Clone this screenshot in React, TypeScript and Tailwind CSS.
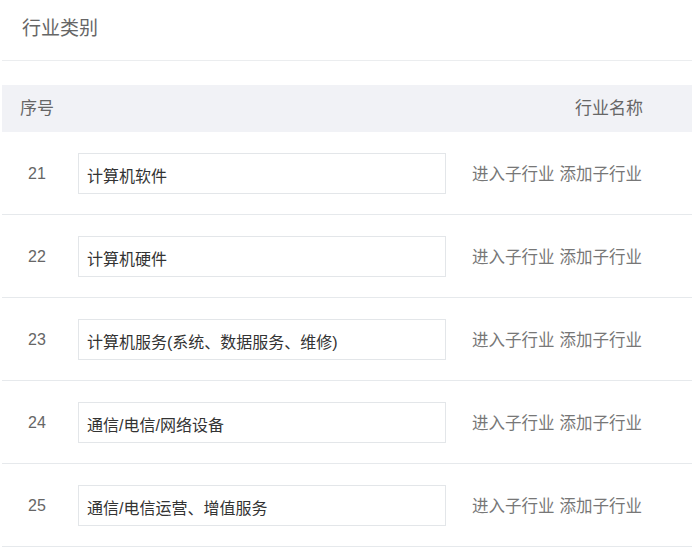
const rows = [
  { id: 21, name: '计算机软件' },
  { id: 22, name: '计算机硬件' },
  { id: 23, name: '计算机服务(系统、数据服务、维修)' },
  { id: 24, name: '通信/电信/网络设备' },
  { id: 25, name: '通信/电信运营、增值服务' },
]

function IndustryRow({ id, name }: { id: number; name: string }) {
  return (
    <div className="flex h-[83px] items-center border-b border-[#e6e9ec]">
      <div className="w-[70px] pt-[2px] text-center text-[16px] text-[#666]">{id}</div>
      <input
        type="text"
        defaultValue={name}
        className="ml-[6px] h-[41px] w-[368px] border border-[#e3e6e9] px-[8px] pt-[3px] text-[16px] text-[#333] outline-none"
      />
      <div className="ml-[26px] flex gap-[5px] pt-[3px] text-[16.5px] text-[#777]">
        <span className="cursor-pointer">进入子行业</span>
        <span className="cursor-pointer">添加子行业</span>
      </div>
    </div>
  )
}

export default function App() {
  return (
    <div
      className="min-h-[552px] bg-white pl-[2px]"
      style={{ fontFamily: '"Liberation Sans", "Noto Sans CJK SC", sans-serif' }}
    >
      <div className="flex h-[61px] items-center border-b border-[#ebedef] pb-[2px] pl-[20px] text-[19px] text-[#666]">
        行业类别
      </div>

      <div className="mt-[24px]">
        <div className="flex h-[47px] items-center justify-between bg-[#f1f2f6] pl-[18px] pr-[49px] pt-[1px] text-[17px] text-[#666]">
          <span>序号</span>
          <span>行业名称</span>
        </div>
        {rows.map((row) => (
          <IndustryRow key={row.id} {...row} />
        ))}
      </div>
    </div>
  )
}
